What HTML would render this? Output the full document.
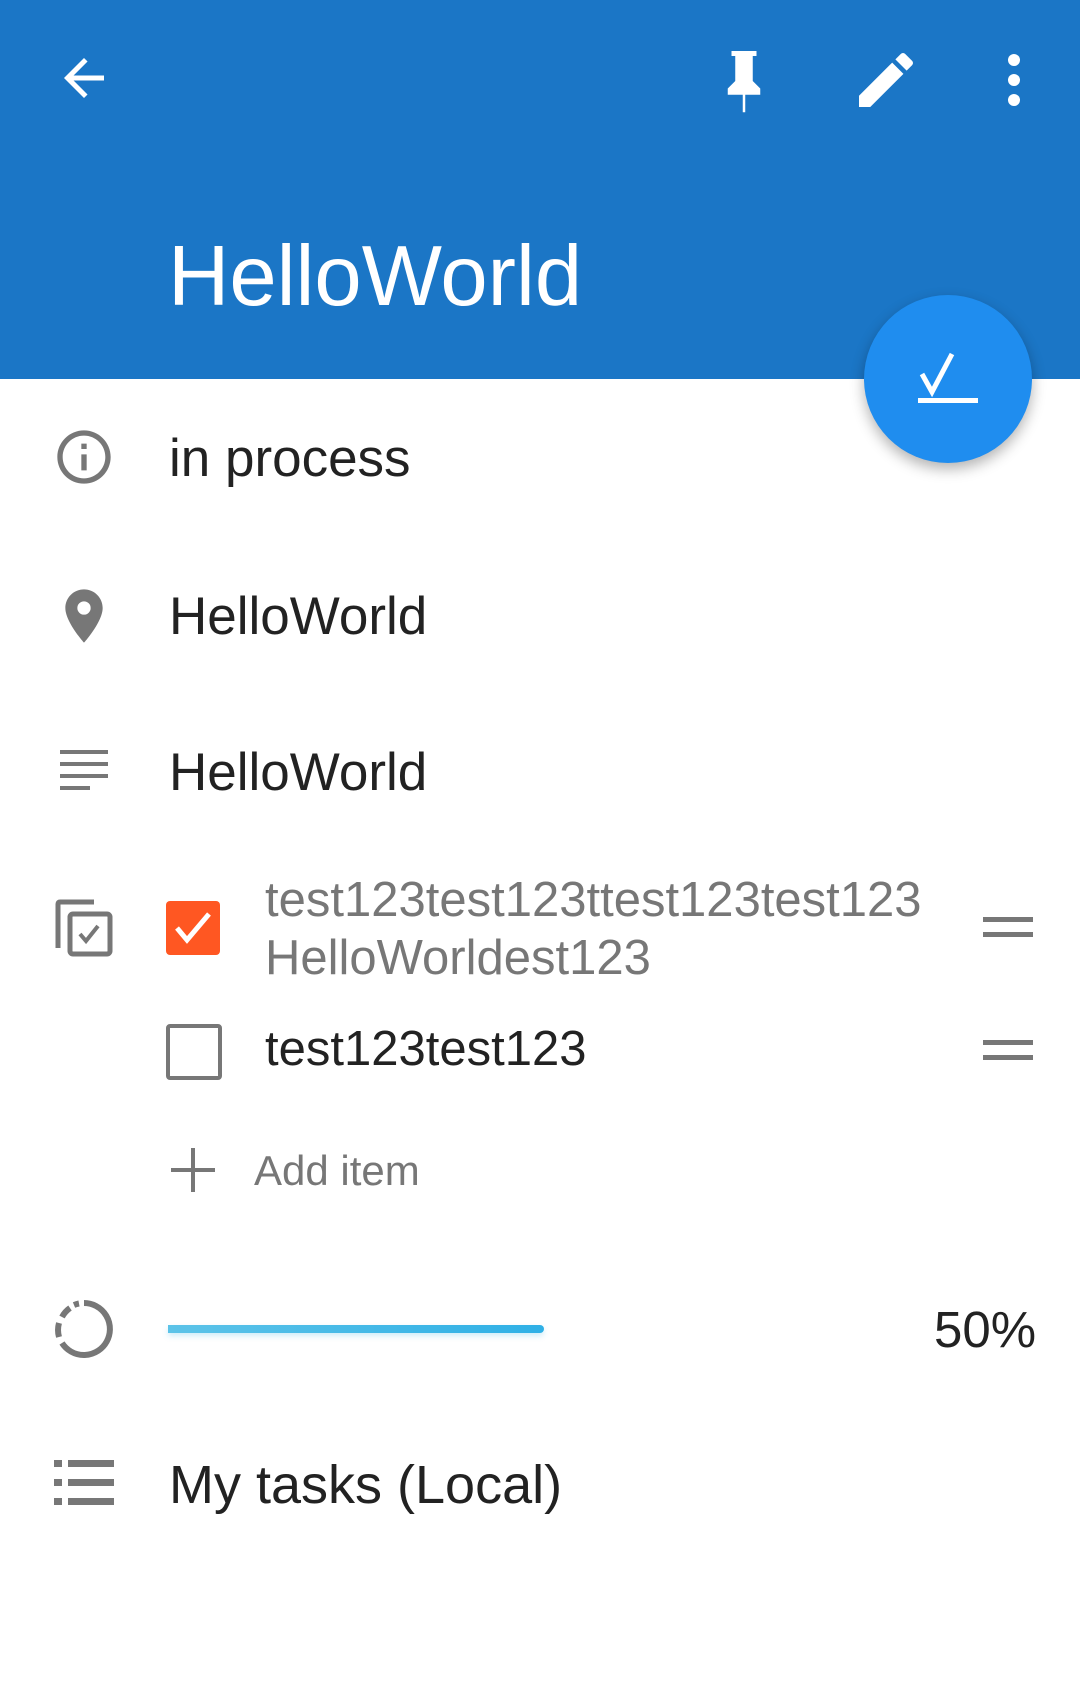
<!DOCTYPE html>
<html><head><meta charset="utf-8"><style>
html,body{margin:0;padding:0;background:#fff;}
body{width:1080px;height:1699px;position:relative;overflow:hidden;font-family:"Liberation Sans",sans-serif;}
.hdr{position:absolute;left:0;top:0;width:1080px;height:379px;background:#1b76c6;}
.t{position:absolute;white-space:nowrap;line-height:1;}
svg{position:absolute;}
.fab{position:absolute;left:864px;top:295px;width:168px;height:168px;border-radius:50%;background:#1f8def;box-shadow:0 6px 14px rgba(0,0,0,.3);}
</style></head><body>
<div class="hdr"></div>
<svg style="left:54px;top:48px" width="60" height="60" viewBox="0 0 24 24"><path d="M20 11H7.83l5.59-5.59L12 4l-8 8 8 8 1.41-1.41L7.83 13H20v-2z" fill="#fff"/></svg>
<svg style="left:714px;top:48px" width="60" height="66" viewBox="0 0 24 26"><path d="M7 1h10v2h-1.5v10l3 3v2.5h-6v7h-1v-7h-6V16l3-3V3H7z" fill="#fff"/></svg>
<svg style="left:850px;top:44px" width="72" height="72" viewBox="0 0 24 24"><path d="M3 17.25V21h3.75L17.81 9.94l-3.75-3.75L3 17.25zM20.71 7.04a1 1 0 000-1.41l-2.34-2.34a1 1 0 00-1.41 0l-1.83 1.83 3.75 3.75 1.83-1.83z" fill="#fff"/></svg>
<svg style="left:1004px;top:54px" width="20" height="52" viewBox="0 0 20 52"><circle cx="10" cy="6" r="6" fill="#fff"/><circle cx="10" cy="26" r="6" fill="#fff"/><circle cx="10" cy="46" r="6" fill="#fff"/></svg>
<div class="t" style="left:168px;top:234px;font-size:85px;color:#fff;">HelloWorld</div>
<div class="fab"></div>
<svg style="left:916px;top:352px" width="64" height="56" viewBox="0 0 64 56"><path d="M6 22l10 18L36 2" stroke="#fff" stroke-width="5" fill="none"/><rect x="2" y="46" width="60" height="5" fill="#fff"/></svg>
<svg style="left:52px;top:425px" width="64" height="64" viewBox="0 0 24 24"><path d="M11 7h2v2h-2zm0 4h2v6h-2zm1-9C6.48 2 2 6.48 2 12s4.48 10 10 10 10-4.48 10-10S17.52 2 12 2zm0 18c-4.41 0-8-3.59-8-8s3.59-8 8-8 8 3.59 8 8-3.59 8-8 8z" fill="#777"/></svg>
<div class="t" style="left:169px;top:432px;font-size:53px;color:#222;">in process</div>
<svg style="left:52px;top:580px" width="64" height="72" viewBox="0 0 24 24"><path d="M12 2C8.13 2 5 5.13 5 9c0 5.25 7 13 7 13s7-7.75 7-13c0-3.87-3.13-7-7-7zm0 9.5a2.5 2.5 0 010-5 2.5 2.5 0 010 5z" fill="#777"/></svg>
<div class="t" style="left:169px;top:590px;font-size:53px;color:#222;">HelloWorld</div>
<svg style="left:58px;top:748px" width="52" height="46" viewBox="0 0 52 46"><g fill="#777"><rect x="2" y="2" width="48" height="4"/><rect x="2" y="14" width="48" height="4"/><rect x="2" y="26" width="48" height="4"/><rect x="2" y="38" width="30" height="4"/></g></svg>
<div class="t" style="left:169px;top:746px;font-size:53px;color:#222;">HelloWorld</div>
<svg style="left:54px;top:898px" width="62" height="62" viewBox="0 0 62 62"><path d="M4 50V6q0-2 2-2h34" stroke="#777" stroke-width="5" fill="none"/><rect x="16" y="16" width="40" height="40" rx="3" stroke="#777" stroke-width="5" fill="none"/><path d="M26 36l6 7 12-15" stroke="#777" stroke-width="4" fill="none"/></svg>
<div style="position:absolute;left:166px;top:901px;width:54px;height:54px;background:#ff5722;border-radius:4px"></div>
<svg style="left:166px;top:901px" width="54" height="54" viewBox="0 0 54 54"><path d="M11 27l10 12 22-26" stroke="#fff" stroke-width="5" fill="none"/></svg>
<div class="t" style="left:265px;top:876px;font-size:49px;color:#777;">test123test123ttest123test123</div>
<div class="t" style="left:265px;top:934px;font-size:49px;color:#777;">HelloWorldest123</div>
<svg style="left:983px;top:917px" width="50" height="22"><rect x="0" y="0" width="50" height="5" fill="#777"/><rect x="0" y="15" width="50" height="5" fill="#777"/></svg>
<div style="position:absolute;left:166px;top:1024px;width:48px;height:48px;border:4px solid #777;border-radius:4px"></div>
<div class="t" style="left:265px;top:1025px;font-size:49px;color:#222;">test123test123</div>
<svg style="left:983px;top:1040px" width="50" height="22"><rect x="0" y="0" width="50" height="5" fill="#777"/><rect x="0" y="15" width="50" height="5" fill="#777"/></svg>
<svg style="left:171px;top:1148px" width="44" height="44"><rect x="0" y="20" width="44" height="4" fill="#777"/><rect x="20" y="0" width="4" height="44" fill="#777"/></svg>
<div class="t" style="left:254px;top:1150px;font-size:42px;color:#777;">Add item</div>
<svg style="left:52px;top:1297px" width="64" height="64" viewBox="0 0 64 64"><path d="M32 6a26 26 0 1 1-22 40" stroke="#777" stroke-width="6" fill="none"/><path d="M7 40a26 26 0 0 1 0-14M10 20a26 26 0 0 1 8-9M22 8a26 26 0 0 1 5-1.5" stroke="#777" stroke-width="6" fill="none"/></svg>
<div style="position:absolute;left:168px;top:1325px;width:376px;height:8px;background:linear-gradient(90deg,#5cc3e8,#2fb0e6);border-radius:0 4px 4px 0;box-shadow:0 3px 6px rgba(60,180,230,.25)"></div>
<div class="t" style="left:934px;top:1304px;font-size:51px;color:#222;">50%</div>
<svg style="left:54px;top:1460px" width="60" height="46" viewBox="0 0 60 46"><g fill="#777"><rect x="0" y="0" width="8" height="7"/><rect x="14" y="0" width="46" height="7"/><rect x="0" y="19" width="8" height="7"/><rect x="14" y="19" width="46" height="7"/><rect x="0" y="38" width="8" height="7"/><rect x="14" y="38" width="46" height="7"/></g></svg>
<div class="t" style="left:169px;top:1458px;font-size:54px;color:#222;">My tasks (Local)</div>
</body></html>
